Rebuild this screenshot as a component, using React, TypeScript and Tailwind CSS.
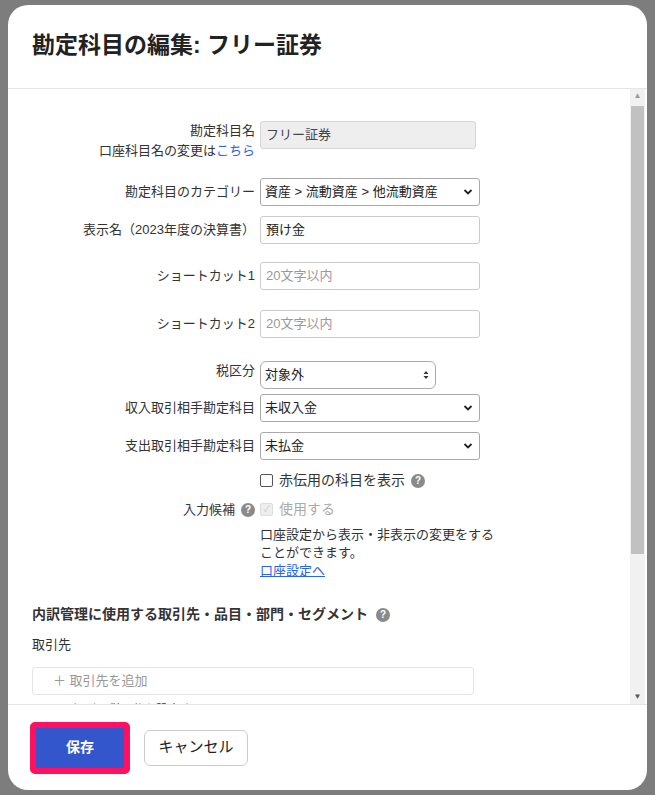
import React from "react";

const F = { fontFamily: '"Liberation Sans","Noto Sans CJK JP",sans-serif' };

function Help() {
  return (
    <span className="inline-flex items-center justify-center w-[14px] h-[14px] rounded-full bg-[#8a8a8a] text-white text-[10px] font-bold leading-none">?</span>
  );
}

function Chevron() {
  return (
    <svg width="10" height="10" viewBox="0 0 10 10" className="absolute right-[6px] top-1/2 -translate-y-1/2">
      <path d="M1.5 3 L5 6.5 L8.5 3" stroke="#222" strokeWidth="1.8" fill="none" />
    </svg>
  );
}

function Row({ label, children, cls = "" }: { label: React.ReactNode; children: React.ReactNode; cls?: string }) {
  return (
    <div className={`flex items-center ${cls}`}>
      <div className="w-[252px] text-right pr-[5px] text-[13px] text-[#333] shrink-0">{label}</div>
      {children}
    </div>
  );
}

function Input({ ph, val, w = "w-[220px]" }: { ph?: string; val?: string; w?: string }) {
  return (
    <div className={`${w} h-[28px] border border-[#ccc] rounded-[3px] bg-white flex items-center px-[5px] text-[13px] ${val ? "text-[#222]" : "text-[#999]"}`}>
      {val || ph}
    </div>
  );
}

function Select({ val, w = "w-[220px]", rounded = "rounded-[3px]", arrows = false }: { val: string; w?: string; rounded?: string; arrows?: boolean }) {
  return (
    <div className={`${w} relative h-[28px] border border-[#aaa] ${rounded} bg-white flex items-center px-[4px] text-[13px] text-[#222]`}>
      {val}
      {arrows ? (
        <svg width="6" height="10" viewBox="0 0 6 10" className="absolute right-[6px] top-1/2 -translate-y-1/2">
          <path d="M0.5 4 L3 1 L5.5 4Z M0.5 6 L3 9 L5.5 6Z" fill="#333" />
        </svg>
      ) : (
        <Chevron />
      )}
    </div>
  );
}

export default function App() {
  return (
    <div style={F} className="w-[655px] h-[795px] bg-[#7d7d7d] pt-[5px] pl-[8px] overflow-hidden">
      <div className="w-[639px] h-[785px] bg-white rounded-[20px] overflow-hidden flex flex-col">
        <div className="h-[84px] border-b border-[#e5e5e5] flex items-center pl-[24px] shrink-0">
          <h1 className="text-[23px] font-bold text-[#222] mt-[-3px]">勘定科目の編集: フリー証券</h1>
        </div>
        <div className="relative flex-1 overflow-hidden">
          <div className="pt-[32px] pr-[20px]">
            <Row label={<><div>勘定科目名</div><div>口座科目名の変更は<span className="text-[#2864f0]">こちら</span></div></>} cls="!items-start">
              <div className="w-[216px] h-[28px] border border-[#d5d5d5] rounded-[3px] bg-[#eee] flex items-center px-[5px] text-[13px] text-[#444]">フリー証券</div>
            </Row>
            <Row label="勘定科目のカテゴリー" cls="mt-[18px]"><Select val="資産 > 流動資産 > 他流動資産" /></Row>
            <Row label="表示名（2023年度の決算書）" cls="mt-[10px]"><Input val="預け金" /></Row>
            <Row label="ショートカット1" cls="mt-[18px]"><Input ph="20文字以内" /></Row>
            <Row label="ショートカット2" cls="mt-[20px]"><Input ph="20文字以内" /></Row>
            <Row label="税区分" cls="mt-[23px] !items-start"><Select val="対象外" w="w-[176px]" rounded="rounded-[6px]" arrows /></Row>
            <Row label="収入取引相手勘定科目" cls="mt-[5px]"><Select val="未収入金" /></Row>
            <Row label="支出取引相手勘定科目" cls="mt-[10px]"><Select val="未払金" /></Row>
            <Row label="" cls="mt-[10px]">
              <div className="flex items-center gap-[6px] text-[14px] text-[#333]">
                <span className="w-[13px] h-[13px] border border-[#555] rounded-[2px] bg-white" />
                赤伝用の科目を表示 <Help />
              </div>
            </Row>
            <Row label={<span className="inline-flex items-center gap-[6px]">入力候補 <Help /></span>} cls="mt-[8px]">
              <div className="flex items-center gap-[6px] text-[14px] text-[#aaa]">
                <span className="w-[13px] h-[13px] border border-[#ddd] rounded-[2px] bg-[#eee] text-[9px] text-[#ccc] flex items-center justify-center">✓</span>
                使用する
              </div>
            </Row>
            <div className="ml-[252px] mt-[6px] text-[13px] text-[#333] leading-[18px] w-[244px]">
              口座設定から表示・非表示の変更をすることができます。
              <div className="text-[#2864f0] underline">口座設定へ</div>
            </div>
            <div className="pl-[24px] mt-[24px] text-[14px] font-bold text-[#333] flex items-center gap-[8px]">内訳管理に使用する取引先・品目・部門・セグメント <Help /></div>
            <div className="pl-[24px] mt-[10px] text-[13px] text-[#333]">取引先</div>
            <div className="ml-[24px] mt-[12px] w-[442px] h-[28px] border border-[#e5e5e5] rounded-[3px] flex items-center pl-[20px] text-[13px] text-[#999]">＋ 取引先を追加</div>
            <div className="pl-[24px] mt-[6px] text-[13px] text-[#333] flex items-center gap-[14px]">品目 <span className="text-[12px]">個別に税区分を設定する</span> <span className="ml-[6px]"><Help /></span></div>
          </div>
          <div className="absolute right-[2px] top-0 bottom-0 w-[15px] bg-[#f1f1f1]">
            <div className="text-[8px] text-[#999] text-center leading-[14px]">▲</div>
            <div className="mx-[1px] mt-[3px] h-[448px] bg-[#c1c1c1]" />
            <div className="absolute bottom-0 left-0 right-0 text-[8px] text-[#555] text-center leading-[14px]">▼</div>
          </div>
        </div>
        <div className="h-[86px] border-t border-[#e5e5e5] flex items-center pl-[22px] gap-[14px] shrink-0">
          <div className="border-[4px] border-[#ff1060] rounded-[5px] p-[2px] bg-[#ff1060]">
            <div className="w-[88px] h-[40px] bg-[#3456cc] text-white text-[14px] font-bold flex items-center justify-center">保存</div>
          </div>
          <div className="w-[104px] h-[36px] border border-[#ccc] rounded-[6px] flex items-center justify-center text-[15px] text-[#222]">キャンセル</div>
        </div>
      </div>
    </div>
  );
}
